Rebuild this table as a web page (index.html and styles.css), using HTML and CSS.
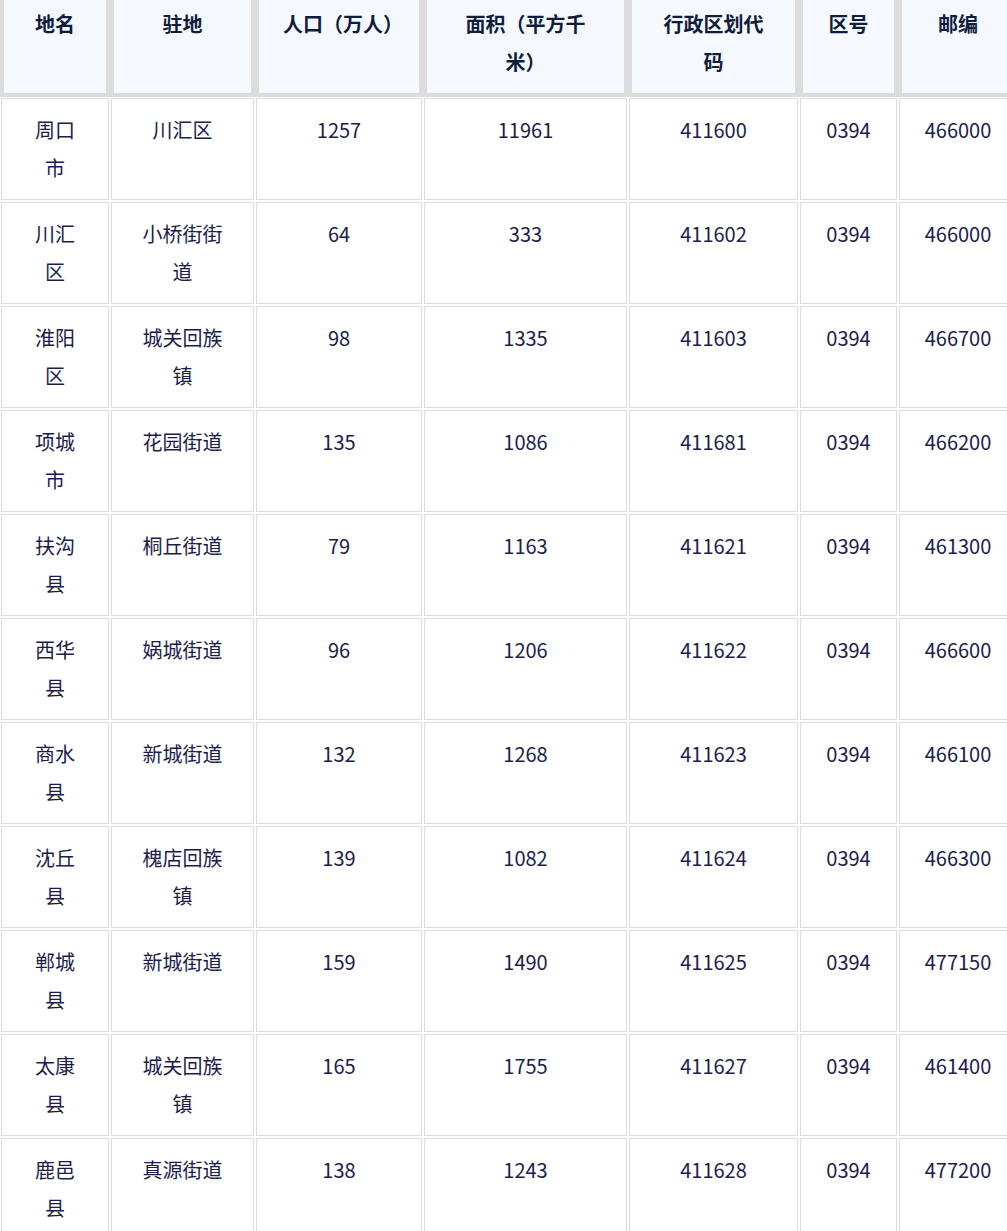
FILE: index.html
```html
<!DOCTYPE html>
<html lang="zh-CN">
<head>
<meta charset="utf-8">
<title>周口市行政区划</title>
<link rel="stylesheet" href="styles.css">
</head>
<body>
<table class="region-table">
  <thead>
    <tr>
      <th class="c1">地名</th>
      <th class="c2">驻地</th>
      <th class="c3">人口（万人）</th>
      <th class="c4">面积（平方千米）</th>
      <th class="c5">行政区划代码</th>
      <th class="c6">区号</th>
      <th class="c7">邮编</th>
    </tr>
  </thead>
  <tbody>
    <tr><td>周口市</td><td>川汇区</td><td>1257</td><td>11961</td><td>411600</td><td>0394</td><td>466000</td></tr>
    <tr><td>川汇区</td><td>小桥街街道</td><td>64</td><td>333</td><td>411602</td><td>0394</td><td>466000</td></tr>
    <tr><td>淮阳区</td><td>城关回族镇</td><td>98</td><td>1335</td><td>411603</td><td>0394</td><td>466700</td></tr>
    <tr><td>项城市</td><td>花园街道</td><td>135</td><td>1086</td><td>411681</td><td>0394</td><td>466200</td></tr>
    <tr><td>扶沟县</td><td>桐丘街道</td><td>79</td><td>1163</td><td>411621</td><td>0394</td><td>461300</td></tr>
    <tr><td>西华县</td><td>娲城街道</td><td>96</td><td>1206</td><td>411622</td><td>0394</td><td>466600</td></tr>
    <tr><td>商水县</td><td>新城街道</td><td>132</td><td>1268</td><td>411623</td><td>0394</td><td>466100</td></tr>
    <tr><td>沈丘县</td><td>槐店回族镇</td><td>139</td><td>1082</td><td>411624</td><td>0394</td><td>466300</td></tr>
    <tr><td>郸城县</td><td>新城街道</td><td>159</td><td>1490</td><td>411625</td><td>0394</td><td>477150</td></tr>
    <tr><td>太康县</td><td>城关回族镇</td><td>165</td><td>1755</td><td>411627</td><td>0394</td><td>461400</td></tr>
    <tr><td>鹿邑县</td><td>真源街道</td><td>138</td><td>1243</td><td>411628</td><td>0394</td><td>477200</td></tr>
  </tbody>
</table>
</body>
</html>
```
FILE: styles.css
```css
html {
  overflow: hidden;
}

body {
  margin: 0;
  background: #ffffff;
  font-family: "Noto Sans CJK SC", "Noto Sans", sans-serif;
  color: #1c1d4a;
  font-size: 20px;
  line-height: 38px;
}

.region-table {
  table-layout: fixed;
  width: 1020px;
  border-collapse: separate;
  border-spacing: 2px;
  margin: -12px 0 0 -1px;
}

.region-table th,
.region-table td {
  box-sizing: border-box;
  text-align: center;
  vertical-align: top;
  padding: 12px 24px;
}

.region-table th {
  background: #f5f8ff;
  border: 3px solid #dcdcdc;
  box-shadow: 0 0 0 1px #dcdcdc;
  font-weight: 700;
  color: #101c3c;
}

.region-table td {
  border: 1px solid #dcdcdc;
  height: 102px;
}

.c1 { width: 108px; }
.c2 { width: 143px; }
.c3 { width: 166px; }
.c4 { width: 203px; }
.c5 { width: 169px; }
.c6 { width: 97px; }
.c7 { width: 118px; }
```
